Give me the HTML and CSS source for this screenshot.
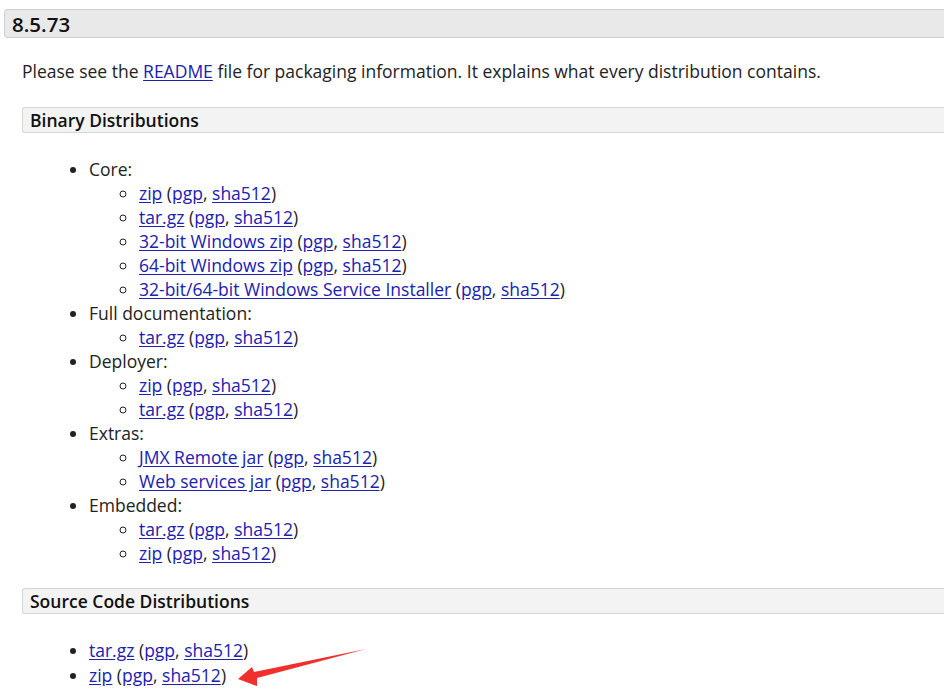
FILE: index.html
```html
<!DOCTYPE html>
<html>
<head>
<meta charset="utf-8">
<link rel="stylesheet" href="styles.css">
</head>
<body>
<div class="page">
  <h3 class="version">8.5.73</h3>
  <div class="section">
    <p class="intro">Please see the <a href="#">README</a> file for packaging information. It explains what every distribution contains.</p>
    <h4 class="sub">Binary Distributions</h4>
    <ul class="top">
      <li>Core:
        <ul class="inner">
          <li><a href="#">zip</a> (<a href="#">pgp</a>, <a href="#">sha512</a>)</li>
          <li><a href="#">tar.gz</a> (<a href="#">pgp</a>, <a href="#">sha512</a>)</li>
          <li><a href="#">32-bit Windows zip</a> (<a href="#">pgp</a>, <a href="#">sha512</a>)</li>
          <li><a href="#">64-bit Windows zip</a> (<a href="#">pgp</a>, <a href="#">sha512</a>)</li>
          <li><a href="#">32-bit/64-bit Windows Service Installer</a> (<a href="#">pgp</a>, <a href="#">sha512</a>)</li>
        </ul>
      </li>
      <li>Full documentation:
        <ul class="inner">
          <li><a href="#">tar.gz</a> (<a href="#">pgp</a>, <a href="#">sha512</a>)</li>
        </ul>
      </li>
      <li>Deployer:
        <ul class="inner">
          <li><a href="#">zip</a> (<a href="#">pgp</a>, <a href="#">sha512</a>)</li>
          <li><a href="#">tar.gz</a> (<a href="#">pgp</a>, <a href="#">sha512</a>)</li>
        </ul>
      </li>
      <li>Extras:
        <ul class="inner">
          <li><a href="#">JMX Remote jar</a> (<a href="#">pgp</a>, <a href="#">sha512</a>)</li>
          <li><a href="#">Web services jar</a> (<a href="#">pgp</a>, <a href="#">sha512</a>)</li>
        </ul>
      </li>
      <li>Embedded:
        <ul class="inner">
          <li><a href="#">tar.gz</a> (<a href="#">pgp</a>, <a href="#">sha512</a>)</li>
          <li><a href="#">zip</a> (<a href="#">pgp</a>, <a href="#">sha512</a>)</li>
        </ul>
      </li>
    </ul>
    <h4 class="sub">Source Code Distributions</h4>
    <ul class="top src">
      <li><a href="#">tar.gz</a> (<a href="#">pgp</a>, <a href="#">sha512</a>)</li>
      <li><a href="#">zip</a> (<a href="#">pgp</a>, <a href="#">sha512</a>)</li>
    </ul>
  </div>
</div>
<svg class="arrow" width="944" height="697" viewBox="0 0 944 697">
  <polygon points="238,679 252,667 254,672 366,649 257,678 257,686" fill="#f0302a"/>
</svg>
</body>
</html>
```
FILE: styles.css
```css
html, body {
  margin: 0;
  padding: 0;
  background: #fff;
}
body {
  font-family: "Open Sans", "Noto Sans", sans-serif;
  font-size: 17.5px;
  line-height: 24px;
  color: #222;
  position: relative;
  width: 944px;
  height: 697px;
  overflow: hidden;
}
.page {
  padding: 9px 0 0 4px;
}
.version {
  margin: 0;
  height: 27px;
  line-height: 28px;
  font-size: 20.5px;
  font-weight: 600;
  color: #111;
  background: #e9e9e9;
  border: 1px solid #cfcfcf;
  border-right: none;
  border-radius: 4px 0 0 4px;
  padding-left: 7px;
}
.section {
  padding-left: 18px;
}
.intro {
  margin: 21px 0 24px 0;
  color: #222;
}
a {
  color: #2020b0;
  text-decoration: underline;
  text-underline-offset: 2px;
}
.sub {
  margin: 0;
  height: 24px;
  line-height: 25px;
  font-size: 17.5px;
  font-weight: 600;
  color: #111;
  background: #f3f3f3;
  border: 1px solid #d5d5d5;
  border-right: none;
  border-radius: 3px 0 0 3px;
  padding-left: 7px;
}
.top {
  margin: 24px 0 23px 0;
  padding-left: 67px;
  list-style: disc;
}
.inner {
  margin: 0;
  padding-left: 50px;
  list-style: circle;
}
.src {
  margin-top: 24px;
}
.src li {
  line-height: 25px;
}
.arrow {
  position: absolute;
  left: 0;
  top: 0;
  pointer-events: none;
}
```
